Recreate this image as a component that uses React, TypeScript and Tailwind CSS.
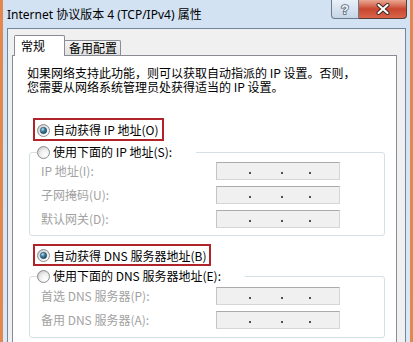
import React from "react";

function Radio({ checked }: { checked?: boolean }) {
  return (
    <svg width="13" height="13" viewBox="0 0 13 13" className="shrink-0 block">
      <defs>
        <radialGradient id="rbg" cx="0.65" cy="0.7" r="0.7">
          <stop offset="0" stopColor="#ffffff" />
          <stop offset="0.6" stopColor="#eeeeee" />
          <stop offset="1" stopColor="#cfcfcf" />
        </radialGradient>
        <radialGradient id="rdot" cx="0.35" cy="0.3" r="0.8">
          <stop offset="0" stopColor="#b9e1f2" />
          <stop offset="0.45" stopColor="#3f7f9f" />
          <stop offset="1" stopColor="#123e58" />
        </radialGradient>
      </defs>
      <circle cx="6.5" cy="6.5" r="6" fill="url(#rbg)" stroke="#8c8e90" strokeWidth="1" />
      {checked && <circle cx="6.5" cy="6.5" r="3.2" fill="url(#rdot)" stroke="#1d4760" strokeWidth="0.6" />}
    </svg>
  );
}

function IpBox() {
  return (
    <div className="h-[18px] w-[124px] border border-[#d6d6d6] border-t-[#ababab] border-l-[#c4c4c4] bg-[#f0f0f0] flex items-start pt-[9px] pl-[32px]">
      <div className="w-[2px] h-[2px] bg-[#505050]" />
      <div className="ml-[30px] w-[2px] h-[2px] bg-[#505050]" />
      <div className="ml-[26px] w-[2px] h-[2px] bg-[#505050]" />
    </div>
  );
}

function Row({ label }: { label: string }) {
  return (
    <>
      <div className="text-[#a2a2a2] leading-[14px] whitespace-nowrap">{label}</div>
      <IpBox />
    </>
  );
}

export default function App() {
  return (
    <div className="w-[413px] h-[342px] overflow-hidden bg-[#e2884e] px-[3px] font-['Noto_Sans_CJK_SC',sans-serif] text-[12px] text-black">
      <div className="flex flex-col bg-gradient-to-b from-[#d2e2f3] to-[#dbe8f6] px-[4px]">
        {/* title bar */}
        <div className="h-[28px] shrink-0 flex items-start">
          <div className="pt-[7px] leading-[16px] font-['Noto_Sans','Noto_Sans_CJK_SC',sans-serif] text-[12px] text-black whitespace-nowrap">
            Internet 协议版本 4 (TCP/IPv4) 属性
          </div>
          <div className="ml-auto -mr-[1px] flex">
            <div className="w-[28px] h-[19px] border border-t-0 border-[#6b7a8c] rounded-bl-[4px] bg-gradient-to-b from-[#e9f0f8] to-[#c6d5e6] flex items-center justify-center">
              <svg width="12" height="14" viewBox="0 0 12 14">
                <text
                  x="6"
                  y="12"
                  textAnchor="middle"
                  fontSize="13"
                  fontWeight="bold"
                  fontFamily="Liberation Sans, sans-serif"
                  fill="#f4f6f9"
                  stroke="#56667a"
                  strokeWidth="1.6"
                  paintOrder="stroke"
                >
                  ?
                </text>
              </svg>
            </div>
            <div className="w-[48px] h-[19px] border border-t-0 border-l-0 border-[#5a3a36] rounded-br-[4px] bg-gradient-to-b from-[#e8a792] via-[#c9452f] to-[#d8664a] flex items-center justify-center">
              <svg width="14" height="12" viewBox="0 0 14 12">
                <path d="M2.5 2 L11.5 10 M11.5 2 L2.5 10" stroke="#3b2522" strokeWidth="4" strokeLinecap="round" />
                <path d="M2.5 2 L11.5 10 M11.5 2 L2.5 10" stroke="#ffffff" strokeWidth="2.2" strokeLinecap="round" />
              </svg>
            </div>
          </div>
        </div>

        {/* client area */}
        <div className="shrink-0 border border-[#71869f] bg-[#f0f0f0] pt-[6px] pl-[4px] pr-[8px]">
          {/* tabs */}
          <div className="flex items-end h-[20px] ml-[2px]">
            <div className="relative z-10 w-[51px] h-[21px] -mb-[1px] bg-white border border-b-0 border-[#898c95] rounded-t-[2px] pl-[6px] pt-[3px] leading-[14px]">
              常规
            </div>
            <div className="-ml-[1px] w-[57px] h-[15px] bg-gradient-to-b from-[#f4f4f4] to-[#e1e1e1] border border-b-0 border-[#898c95] rounded-t-[2px] pl-[4px] leading-[13px]">
              备用配置
            </div>
          </div>

          {/* panel */}
          <div className="border border-[#898c95] bg-white pl-[14px] pt-[10px] pb-[30px]">
            <div className="leading-[14px] whitespace-nowrap">如果网络支持此功能，则可以获取自动指派的 IP 设置。否则，</div>
            <div className="leading-[14px] whitespace-nowrap">您需要从网络系统管理员处获得适当的 IP 设置。</div>

            <div className="mt-[24px] ml-[6px] w-fit h-[23px] border-2 border-[#b02328] flex items-center pt-[1px] pl-[2px] pr-[3px] gap-[3px]">
              <Radio checked />
              <span className="leading-[14px] whitespace-nowrap">自动获得 IP 地址(O)</span>
            </div>

            <fieldset className="mt-[4px] ml-[2px] w-[356px] border border-[#d5dfe5] rounded-[3px] p-0 m-0">
              <legend className="ml-[7px] pr-[24px] h-[14px] flex items-center gap-[3px]">
                <Radio />
                <span className="leading-[14px] whitespace-nowrap">使用下面的 IP 地址(S):</span>
              </legend>
              <div className="grid grid-cols-[175px_124px] items-center gap-y-[6px] pl-[11px] pt-[3px] pb-[7px]">
                <Row label="IP 地址(I):" />
                <Row label="子网掩码(U):" />
                <Row label="默认网关(D):" />
              </div>
            </fieldset>

            <div className="mt-[8px] ml-[6px] w-fit h-[22px] border-2 border-[#b02328] flex items-center pt-[1px] pl-[2px] pr-[3px] gap-[3px]">
              <Radio checked />
              <span className="leading-[14px] whitespace-nowrap">自动获得 DNS 服务器地址(B)</span>
            </div>

            <fieldset className="mt-[3px] ml-[2px] w-[356px] border border-[#d5dfe5] rounded-[3px] p-0 m-0">
              <legend className="ml-[7px] pr-[24px] h-[14px] flex items-center gap-[3px]">
                <Radio />
                <span className="leading-[14px] whitespace-nowrap">使用下面的 DNS 服务器地址(E):</span>
              </legend>
              <div className="grid grid-cols-[175px_124px] items-center gap-y-[6px] pl-[11px] pt-[4px] pb-[8px]">
                <Row label="首选 DNS 服务器(P):" />
                <Row label="备用 DNS 服务器(A):" />
              </div>
            </fieldset>
          </div>
        </div>
      </div>
    </div>
  );
}
